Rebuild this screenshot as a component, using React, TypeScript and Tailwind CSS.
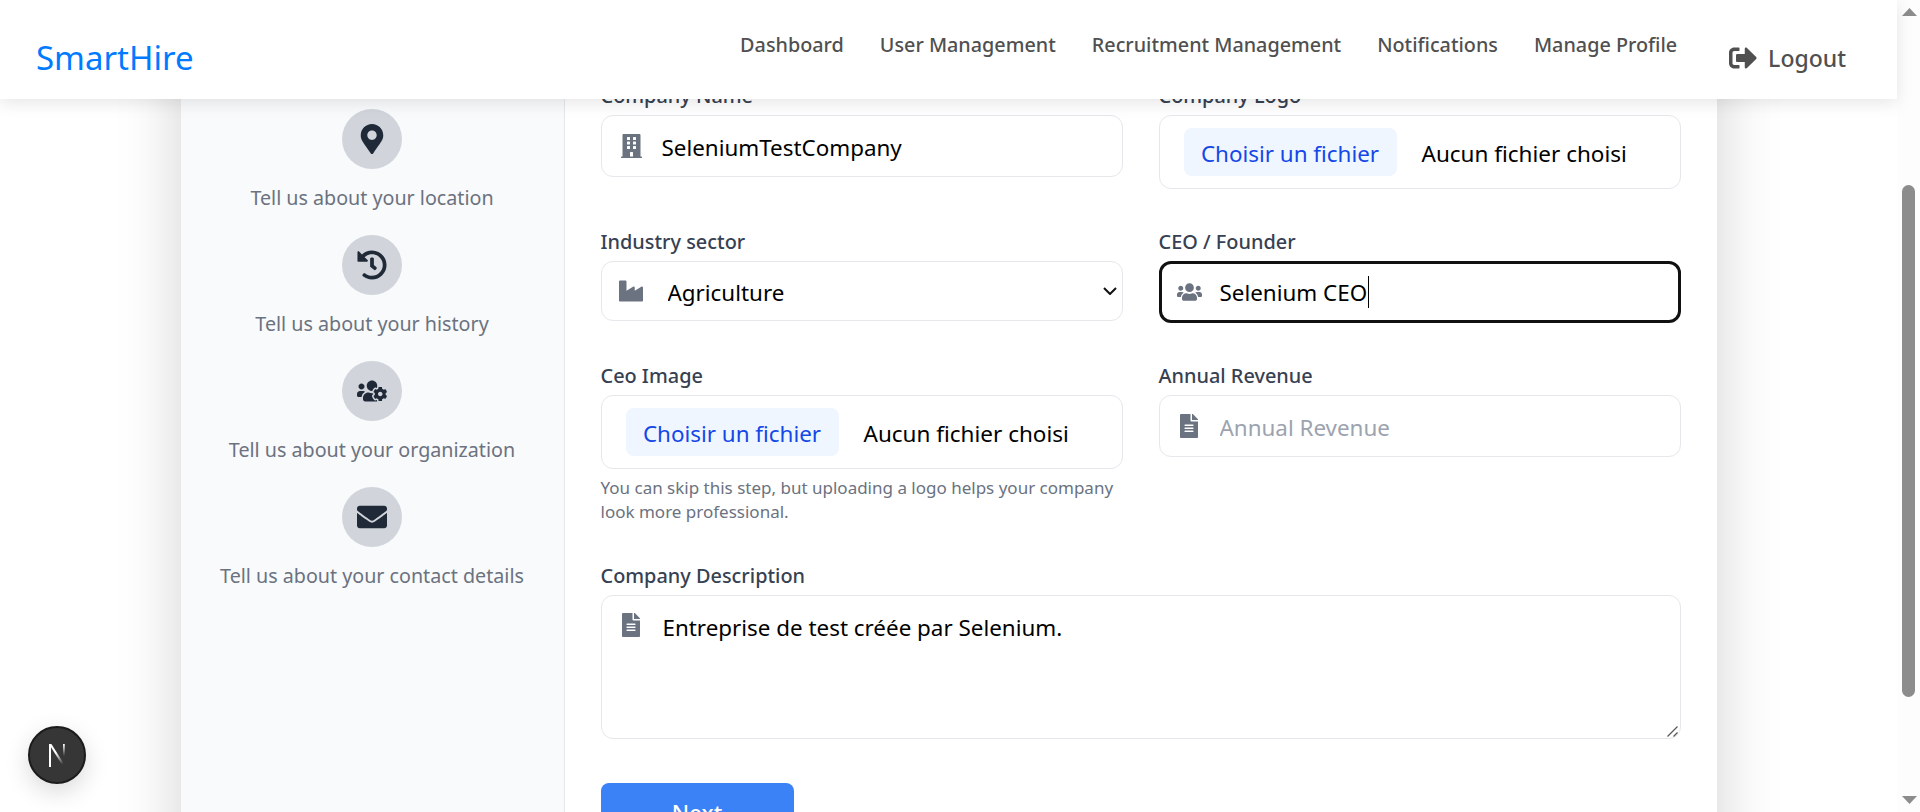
import type { ReactNode } from 'react';
import {
  FaBuilding,
  FaEnvelope,
  FaFileAlt,
  FaHistory,
  FaIndustry,
  FaMapMarkerAlt,
  FaSignOutAlt,
  FaUsers,
  FaUsersCog,
} from 'react-icons/fa';

const NAV_LINKS = ['Dashboard', 'User Management', 'Recruitment Management', 'Notifications', 'Manage Profile'];

const STEPS = [
  { icon: <FaMapMarkerAlt className="w-[30px] h-[30px]" />, text: 'Tell us about your location' },
  { icon: <FaHistory className="w-[30px] h-[30px]" />, text: 'Tell us about your history' },
  { icon: <FaUsersCog className="w-[30px] h-[30px]" />, text: 'Tell us about your organization' },
  { icon: <FaEnvelope className="w-[30px] h-[30px]" />, text: 'Tell us about your contact details' },
];

const Label = ({ children }: { children: ReactNode }) => (
  <label className="block h-[27px] mb-[6px] text-[19.9px] leading-[27px] font-medium text-[#374151]">
    {children}
  </label>
);

const FilePicker = () => (
  <div className="flex items-center h-[74px] rounded-xl border border-[#e5e7eb] pl-6 bg-white">
    <span className="flex items-center justify-center w-[213px] h-12 pt-[3px] rounded-lg bg-[#eff6ff] text-[#1447e6] text-[22.4px]">
      Choisir un fichier
    </span>
    <span className="ml-[25px] pt-[4px] text-[22.5px] text-black">Aucun fichier choisi</span>
  </div>
);

const NextBadge = () => (
  <div className="absolute left-[28px] top-[726px] z-20 flex items-center justify-center w-[58px] h-[58px] rounded-full bg-[#363636] border-2 border-[#1c1c1c] shadow-[0_8px_24px_rgba(0,0,0,0.15)]">
    <svg width="18" height="23" viewBox="0 0 18 23">
      <defs>
        <linearGradient id="nDiag" x1="0" y1="0" x2="0.6" y2="1">
          <stop offset="0.45" stopColor="#fff" />
          <stop offset="1" stopColor="#fff" stopOpacity="0" />
        </linearGradient>
        <linearGradient id="nStem" x1="0" y1="0" x2="0" y2="1">
          <stop offset="0" stopColor="#fff" />
          <stop offset="0.7" stopColor="#fff" stopOpacity="0" />
        </linearGradient>
      </defs>
      <path d="M1 0h2v23H1z" fill="#fff" />
      <path d="M1 0h2.4L18 23h-2.6z" fill="url(#nDiag)" />
      <path d="M15 0h1.8v17H15z" fill="url(#nStem)" />
    </svg>
  </div>
);

const Scrollbar = () => (
  <div className="flex flex-col items-center w-[23px] h-full bg-[#fdfdfd]">
    <svg className="mt-[8px] ml-[1px]" width="15" height="8" viewBox="0 0 15 8">
      <path d="M7.5 0L15 8H0z" fill="#8c8c8c" />
    </svg>
    <div className="mt-[169px] w-[13px] h-[512px] rounded-full bg-[#8c8c8c]" />
    <svg className="mt-[99px] ml-[1px]" width="15" height="8" viewBox="0 0 15 8">
      <path d="M0 0h15L7.5 8z" fill="#8c8c8c" />
    </svg>
  </div>
);

export default function App() {
  return (
    <div className="relative flex h-[812px] overflow-hidden bg-white font-['Noto_Sans',sans-serif]">
      <nav className="absolute left-0 top-0 z-10 flex justify-between w-[1897px] h-[99px] pl-9 pr-[51px] bg-white shadow-[0_4px_16px_rgba(0,0,0,0.1)]">
        <a className="self-start mt-[36px] text-[33px] leading-[44px] text-[#007bff]">SmartHire</a>
        <div className="flex">
          <ul className="flex gap-9 pt-[31px] text-[19.8px] leading-[27px] font-medium text-[#505050]">
            {NAV_LINKS.map((link) => (
              <li key={link}>{link}</li>
            ))}
          </ul>
          <button className="self-start flex items-center gap-[11px] mt-[38px] ml-[52px] h-10 text-[23px] font-medium text-[#505050]">
            <FaSignOutAlt className="w-7 h-7" />
            Logout
          </button>
        </div>
      </nav>

      <main className="w-[1897px] shrink-0">
        <div className="flex w-[1536px] h-[1000px] mx-auto bg-white shadow-[0_0_60px_rgba(0,0,0,0.18)]">
          <aside className="flex flex-col items-center w-[384px] pt-[109px] bg-[#f9fafb] border-r border-[#e5e7eb]">
            {STEPS.map((step) => (
              <div key={step.text} className="flex flex-col items-center h-[126px]">
                <div className="flex items-center justify-center w-[60px] h-[60px] rounded-full bg-[#d1d5db] text-[#1f2937]">
                  {step.icon}
                </div>
                <p className="mt-[15px] text-[19.7px] leading-[27px] text-[#6b7280]">{step.text}</p>
              </div>
            ))}
          </aside>

          <form className="flex-1 px-9 pt-[82px]">
            <div className="grid grid-cols-2 gap-x-9 gap-y-[39px] items-start">
              <div>
                <Label>Company Name</Label>
                <div className="flex items-center gap-5 h-[62px] rounded-xl border border-[#e5e7eb] pl-[19px]">
                  <FaBuilding className="w-[21px] h-6 text-[#6b7280]" />
                  <input
                    readOnly
                    value="SeleniumTestCompany"
                    className="flex-1 pt-[3px] outline-none text-[22.4px] text-black"
                  />
                </div>
              </div>
              <div>
                <Label>Company Logo</Label>
                <FilePicker />
              </div>

              <div>
                <Label>Industry sector</Label>
                <div className="flex items-center h-[60px] rounded-xl border border-[#e5e7eb] pl-[17px] pr-[5px]">
                  <FaIndustry className="w-6 h-6 text-[#6b7280] shrink-0" />
                  <select className="flex-1 appearance-none ml-[25px] pt-[4px] outline-none bg-white text-[22.4px] text-black">
                    <option>Agriculture</option>
                  </select>
                  <svg width="14" height="8" viewBox="0 0 14 8" fill="none" stroke="#111" strokeWidth="2">
                    <path d="M1 1l6 6 6-6" />
                  </svg>
                </div>
              </div>
              <div>
                <Label>CEO / Founder</Label>
                <div className="relative flex items-center gap-[18px] h-[62px] rounded-xl border-[3px] border-[#111] pl-[15px]">
                  <FaUsers className="w-[25px] h-5 text-[#6b7280]" />
                  <input
                    readOnly
                    value="Selenium CEO"
                    className="flex-1 pt-[2px] outline-none text-[22.4px] text-black"
                  />
                  <span className="absolute left-[206px] top-[12px] w-px h-8 bg-black" />
                </div>
              </div>

              <div>
                <Label>Ceo Image</Label>
                <FilePicker />
                <p className="mt-[7px] text-[17px] leading-[24px] text-[#6b7280]">
                  You can skip this step, but uploading a logo helps your company look more professional.
                </p>
              </div>
              <div>
                <Label>Annual Revenue</Label>
                <div className="flex items-center gap-[22px] h-[62px] rounded-xl border border-[#e5e7eb] pl-5">
                  <FaFileAlt className="w-[18px] h-6 text-[#6b7280]" />
                  <input
                    readOnly
                    placeholder="Annual Revenue"
                    className="flex-1 pt-[4px] outline-none text-[22.4px] text-black placeholder:text-[#9ca3af]"
                  />
                </div>
              </div>
            </div>

            <div className="mt-[38px]">
              <Label>Company Description</Label>
              <div className="relative">
                <FaFileAlt className="absolute left-[21px] top-[18px] w-[18px] h-6 text-[#6b7280]" />
                <textarea
                  readOnly
                  value="Entreprise de test créée par Selenium."
                  className="block w-full h-[144px] resize-none rounded-xl border border-[#e5e7eb] pl-[61px] pt-[15px] outline-none text-[22.4px] text-black"
                />
                <svg className="absolute right-[3px] bottom-[2px]" width="11" height="11" viewBox="0 0 11 11" stroke="#555" strokeWidth="1.2">
                  <path d="M0.5 10.5L10.5 0.5M6.5 10.5L10.5 6.5" />
                </svg>
              </div>
            </div>

            <button
              type="button"
              className="mt-11 w-[193px] h-[60px] rounded-lg bg-[#3b82f6] text-white text-[22.4px] font-medium"
            >
              Next
            </button>
          </form>
        </div>
      </main>

      <Scrollbar />
      <NextBadge />
    </div>
  );
}
